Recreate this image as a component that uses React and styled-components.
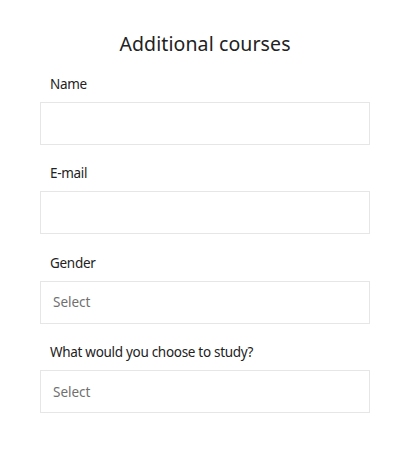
import React from 'react';
import styled, { createGlobalStyle } from 'styled-components';

const GlobalStyle = createGlobalStyle`
  body {
    margin: 0;
    background: #fff;
    font-family: "Noto Sans", "Open Sans", sans-serif;
  }
`;

const Page = styled.div`
  padding: 30px 40px 0 40px;
  width: 330px;
`;

const Title = styled.h2`
  margin: 0 0 17px;
  text-align: center;
  font-size: 19.5px;
  font-weight: 400;
  color: #222;
  letter-spacing: 0.1px;
`;

const Field = styled.div`
  display: flex;
  flex-direction: column;
  margin-bottom: 18.4px;
`;

const Label = styled.label`
  padding-left: 10px;
  height: 28px;
  font-size: 13.5px;
  color: #222;
  line-height: 20px;
  letter-spacing: -0.3px;
`;

const Box = styled.div`
  box-sizing: border-box;
  height: 43px;
  border: 1px solid #e6e6e6;
  display: flex;
  align-items: center;
  padding-left: 12px;
  font-size: 13.5px;
  color: ${(p) => (p.placeholder ? '#707070' : '#222')};
`;

const fields = [
  { label: 'Name' },
  { label: 'E-mail' },
  { label: 'Gender', select: true },
  { label: 'What would you choose to study?', select: true },
];

export default function App() {
  return (
    <>
      <GlobalStyle />
      <Page>
        <Title>Additional courses</Title>
        {fields.map((f) => (
          <Field key={f.label}>
            <Label>{f.label}</Label>
            <Box placeholder={f.select ? 1 : 0}>{f.select ? 'Select' : ''}</Box>
          </Field>
        ))}
      </Page>
    </>
  );
}
